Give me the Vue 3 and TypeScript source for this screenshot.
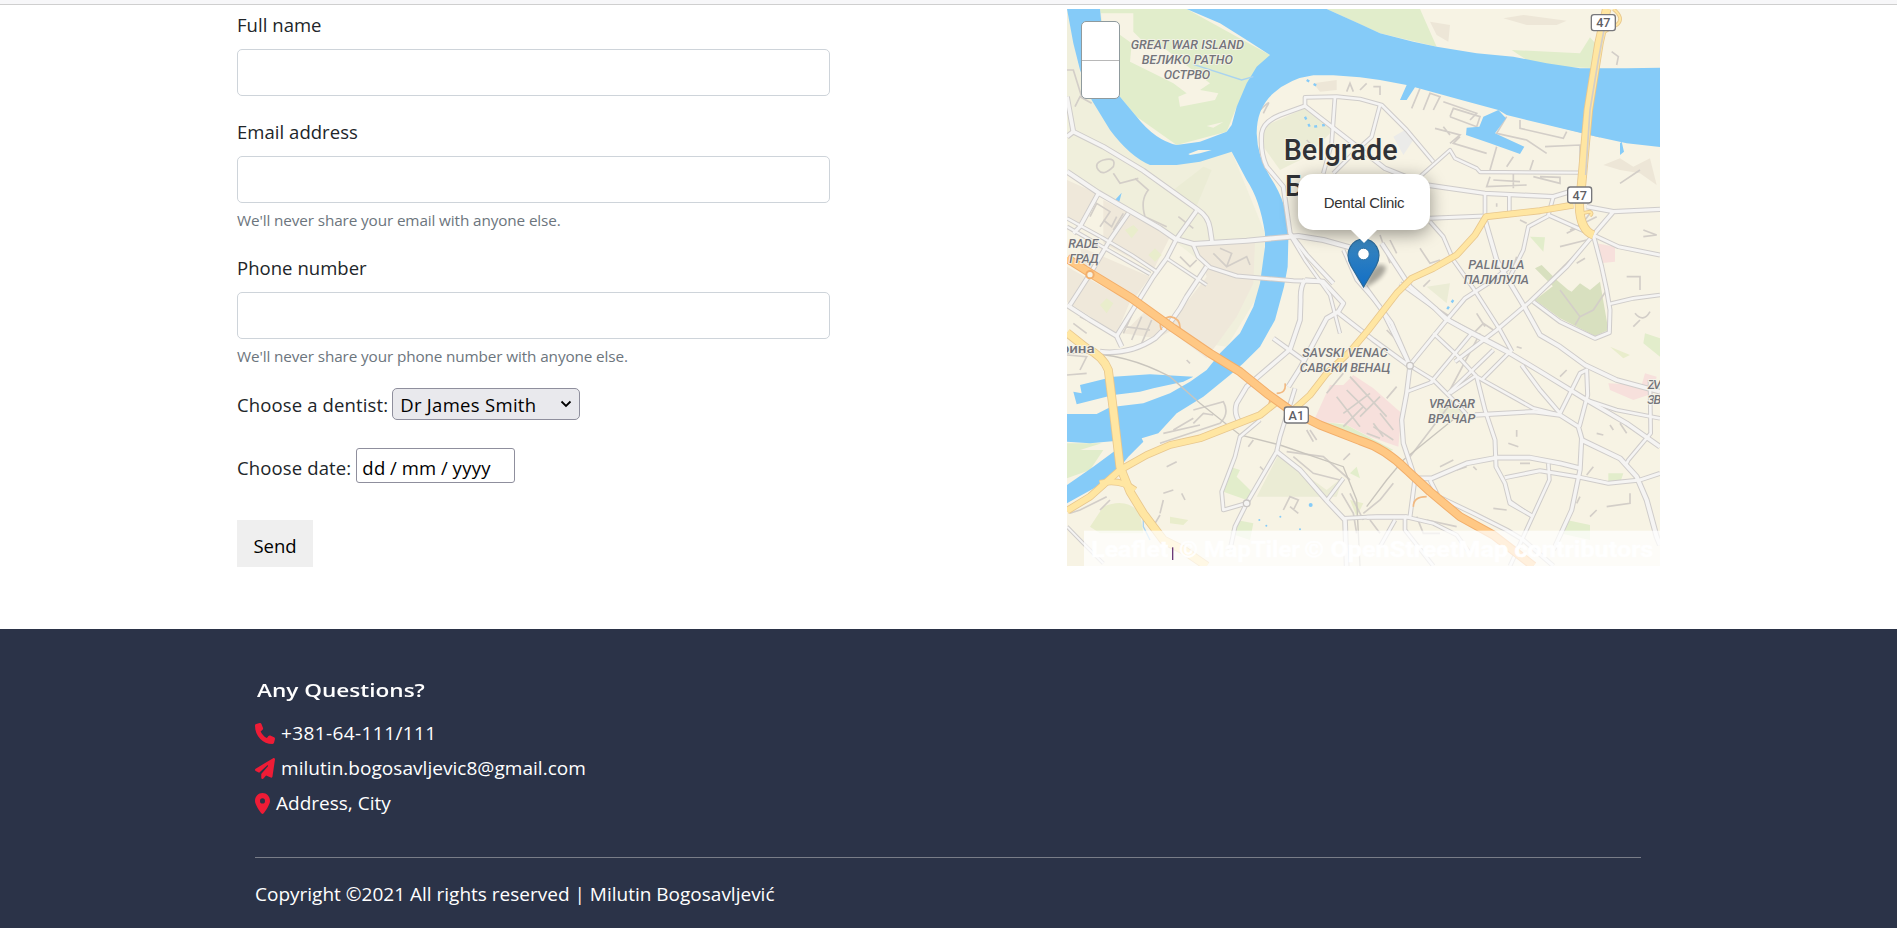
<script setup lang="ts">
interface Road { d: string; w: number }
interface Label { t: string; x: number; y: number; len: number; size: number }

const streets: Road[] = [
  { d: 'M21 290L40 395L130 440L250 512L345 580L415 630Q445 650 450 685L456 725', w: 13 },
  { d: 'M40 395L21 410', w: 13 },
  { d: 'M21 515L115 578L205 630L300 685L345 716L400 732L560 722L715 708L790 720L870 742', w: 14 },
  { d: 'M21 655L130 715L215 765L290 815M21 680L130 742L270 822', w: 9 },
  { d: 'M115 580L60 680L40 700M205 640L150 720L90 822L30 915', w: 12 },
  { d: 'M410 632L350 716L320 775L280 830L170 1008', w: 12 },
  { d: 'M21 915L90 960L170 1008L185 1040', w: 13 },
  { d: 'M120 1055Q210 1065 285 1015Q345 960 380 890L440 800', w: 13 },
  { d: 'M400 735L415 770L450 802L530 828L700 842L790 845', w: 11 },
  { d: 'M320 775L440 855', w: 8 },
  { d: 'M735 318L735 292L830 290L900 297L965 315L1040 390L1120 485', w: 10 },
  { d: 'M735 318L660 345Q610 365 605 400Q600 460 620 500L670 560L690 700L740 765L820 850', w: 12 },
  { d: 'M735 318L860 415L975 505L1100 555L1275 580L1480 590L1530 575', w: 12 },
  { d: 'M825 290L815 430L790 520M960 315L935 410L880 460L820 520', w: 10 },
  { d: 'M1080 530L1170 450L1185 475L1250 505L1260 516L1555 518', w: 9 },
  { d: 'M1275 580L1275 650M1348 585L1348 635M1480 590L1465 645', w: 10 },
  { d: 'M1110 655L1275 648', w: 11 },
  { d: 'M690 705L735 780L810 885L840 1000', w: 9 },
  { d: 'M850 750L890 840L960 920L1050 1100', w: 9 },
  { d: 'M735 840Q720 860 722 900L720 960L690 1048L560 1160L530 1210Q520 1240 540 1268', w: 13 },
  { d: 'M735 840L790 845L850 910L835 935L800 955L720 1105L685 1160', w: 13 },
  { d: 'M640 1015L730 1080M830 935L940 1020L1050 1100', w: 12 },
  { d: 'M600 1260L540 1310L525 1370L485 1475L490 1530L560 1510', w: 10 },
  { d: 'M705 1165L660 1310L650 1355L560 1510L525 1580L510 1650', w: 11 },
  { d: 'M650 1355L720 1410L800 1502L855 1560L860 1698', w: 13 },
  { d: 'M800 1502L850 1435M850 1555L950 1550L1040 1550', w: 10 },
  { d: 'M915 860L995 970L1050 1097L1040 1180L1025 1260L1030 1330L1065 1435', w: 12 },
  { d: 'M965 730L1050 860L1125 925L1155 955L1235 1000L1350 1060L1450 1120L1580 1200L1700 1270L1800 1340', w: 13 },
  { d: 'M1020 850L1125 925L1170 962L1285 1022L1354 1058', w: 10 },
  { d: 'M1110 665L1150 710L1180 780L1240 865L1320 990L1356 1055', w: 10 },
  { d: 'M1275 660L1310 780L1345 840L1390 915L1440 1005L1500 1040L1575 1095L1670 1140L1800 1175', w: 13 },
  { d: 'M1465 648L1405 680L1390 750L1345 840', w: 10 },
  { d: 'M1465 645L1600 705L1675 740L1800 765', w: 11 },
  { d: 'M1600 705L1660 635L1800 628M1580 620L1660 635', w: 12 },
  { d: 'M1600 705L1520 800L1410 905L1310 990L1185 1085', w: 11 },
  { d: 'M1600 705L1625 800L1640 870L1650 930L1648 998L1605 1015L1500 965L1420 905', w: 11 },
  { d: 'M1648 912L1720 895L1800 885', w: 10 },
  { d: 'M1050 1095L1160 960L1215 895L1300 840L1350 800', w: 11 },
  { d: 'M1120 1000L1190 1065L1250 1130L1420 1225L1500 1245', w: 10 },
  { d: 'M1110 1150L1235 1000M1165 1180L1300 1050M1265 1140L1350 1055', w: 10 },
  { d: 'M1050 1097L1120 1140L1190 1210L1220 1244', w: 10 },
  { d: 'M1040 1175L1120 1145M1170 1180L1250 1125', w: 10 },
  { d: 'M1250 1130L1275 1230L1305 1320L1308 1400L1335 1450L1350 1510L1420 1550', w: 11 },
  { d: 'M1245 1245L1420 1235L1500 1245L1555 1280L1565 1315L1560 1410L1535 1530L1480 1650', w: 12 },
  { d: 'M1385 1095L1440 1170L1500 1240L1560 1120L1580 1110L1583 1185L1558 1280', w: 11 },
  { d: 'M1580 1200L1670 1230L1800 1255M1770 1140L1772 1300L1705 1380L1700 1390', w: 10 },
  { d: 'M1565 1320L1680 1375L1730 1430L1760 1500L1790 1610L1800 1635', w: 14 },
  { d: 'M1065 1435L1115 1435L1220 1390L1310 1373L1410 1373L1500 1390L1560 1405', w: 13 },
  { d: 'M1335 1433L1440 1412L1560 1432L1645 1450L1740 1440L1800 1420', w: 11 },
  { d: 'M1465 1390L1468 1440L1390 1610L1350 1698', w: 10 },
  { d: 'M1065 1435L1050 1550L1035 1552L920 1552M1110 1440L1135 1490L1240 1540L1340 1590L1390 1620L1480 1698', w: 11 },
  { d: 'M1035 1550L1120 1570L1190 1605L1230 1660M1035 1552L1035 1590L1120 1698M1005 1560L960 1640', w: 10 },
  { d: 'M1345 1500L1415 1548M21 1580L70 1630L130 1690', w: 8 },
]

const yellow: Road[] = [
  { d: 'M21 998L80 1045Q130 1070 145 1110L160 1230L180 1400L210 1475L250 1540L310 1620L370 1650L440 1698', w: 24 },
  { d: 'M21 1532L90 1490L180 1410L260 1365L330 1335L420 1315L510 1280L600 1245L650 1205', w: 20 },
  { d: 'M120 1450Q180 1435 225 1470', w: 18 },
  { d: 'M700 1230L750 1185L800 1120L870 1055L925 990L1010 880L1055 835L1120 805L1190 765L1245 705L1278 650L1440 632L1540 615', w: 18 },
  { d: 'M1640 27L1617 130L1585 330L1565 550L1558 615Q1560 690 1600 705', w: 25 },
  { d: 'M1660 27Q1695 55 1670 75L1625 100M1565 640L1590 635Q1600 640 1590 647', w: 8 },
]

const motorway = 'M21 775L100 825L215 895L340 985L450 1060L540 1115L620 1180L690 1230L780 1275L900 1322Q975 1345 1040 1410L1110 1475L1200 1550L1300 1605L1420 1698'

const lanes: string[] = [
  'M21 210L40 210L65 290M45 320L60 290L95 310',
  'M130 480Q100 490 115 510Q130 530 160 500Q170 470 130 480M160 520L180 550L235 535M225 535L265 570Q240 600 255 650L320 680',
  'M90 650L110 610L150 635L120 680M130 660L155 680L170 650M160 690L190 640M355 650L400 685M360 770L390 800L410 780M460 760L500 800L560 770L570 795M480 745L515 760L500 800',
  'M735 560L760 585M720 555L740 570M590 340Q640 290 620 320L610 340M740 420L770 450M780 540L820 560M850 560L830 590',
  'M1055 325L1080 265M1090 330L1110 280L1140 290L1120 330M1150 305L1250 340L1230 360M1170 350L1180 325L1260 350L1250 380L1170 350M1125 385L1200 405L1170 430M1150 380L1170 405M1200 410L1180 430L1280 460M1340 350L1310 400L1400 420L1460 460M1380 360L1380 385L1510 415L1520 395M1310 440L1290 510M1400 350L1480 375L1620 410M1455 440L1560 435L1560 515',
  'M1290 530L1280 560L1400 555M1300 540L1380 545M1420 530L1500 550L1500 532L1440 530M1360 520L1360 565M1420 480L1410 510M1360 470L1340 500',
  'M1520 700L1560 680L1590 640M1500 740L1580 720M1550 760L1510 800L1470 840M1575 775L1550 790M1530 690L1610 650M1655 155L1675 170L1670 195',
  'M1680 550L1740 510M1750 690L1790 705L1750 710M1700 830L1740 830L1740 870M1720 980L1740 960M1725 940Q1750 970 1770 935',
  'M21 1065L80 1070L60 1110M80 1000L40 970M100 970L60 950M190 1000L220 935M215 1020L245 950M245 1030L275 960M195 980L270 990M380 1080L390 1090',
  'M21 1125L80 1120M400 1270L430 1240L460 1245M340 1290L400 1255M310 1300L420 1275M300 1330L480 1270Q510 1240 490 1205L400 1230',
  'M140 1490L60 1530L30 1540M150 1500L120 1530M320 1400L350 1385M310 1480L340 1470M310 1500L300 1540M365 1480L375 1500M300 1545L285 1570',
  'M700 1530L715 1500L690 1490L670 1530M690 1520L715 1540M600 1400L610 1410M580 1320L565 1340M750 1290L770 1320M740 1290L760 1325',
  'M860 1170L920 1230M830 1190L900 1280M850 1240L930 1180M900 1250L960 1190M870 1130L980 1250M850 1280L910 1220M960 1240L1000 1290M800 1180L850 1120M940 1270L970 1310M980 1195L1010 1160',
  'M845 1480L880 1540L890 1600M870 1480L910 1560M870 1360L850 1380M700 1370L760 1420L840 1440M680 1355L790 1370L870 1440M940 1280L1000 1320M920 1300L960 1315',
  'M1180 1200L1050 1370M1170 1170L1260 1000M1240 1000L1270 970L1300 990M1250 940L1275 980M1140 930L1170 950M980 990L1020 1030M1090 860L1110 840',
  'M1190 1410L1220 1400M1250 1410L1240 1400M1300 1525L1340 1530M1380 1390L1410 1390M1550 1510L1560 1490M1590 1550L1610 1530M1640 1520L1710 1510L1710 1480M1600 1400L1580 1425',
  'M1345 1330L1375 1340M1370 1310L1370 1290M1500 1130L1520 1110M1370 1040L1385 1045M1610 1300L1630 1305M1650 1275L1660 1290M1680 1270L1700 1300',
  'M1000 1450L960 1500L910 1540M1100 1560L1190 1580M1070 1550L1090 1600L1140 1600M930 1560L960 1600M1140 1400L1180 1380',
  'M1500 870L1560 950L1600 930L1640 870M1560 950L1545 975M860 275L870 250L880 275M900 270L920 250M940 260L960 260L960 285',
  'M860 780L900 800M990 720L1010 760M960 705L990 790M1080 745L1110 790L1140 780M1380 660L1400 670M1310 620L1310 610M1370 770L1360 800',
]

const ramps = 'M330 950Q290 960 305 990M360 995Q365 955 330 950M620 1170Q640 1190 620 1230M650 1180Q680 1180 675 1150M1060 1520Q1060 1490 1100 1490M1130 1475L1140 1500'

const rail = 'M21 1060Q180 1050 330 1130L420 1210L540 1305L660 1335L850 1400L890 1500L900 1698M1190 1250L1030 1380L980 1440L920 1520'

const labels: Label[] = [
  { t: 'GREAT WAR ISLAND', x: 382, y: 147, len: 340, size: 38 },
  { t: 'ВЕЛИКО РАТНО', x: 382, y: 192, len: 274, size: 38 },
  { t: 'ОСТРВО', x: 381, y: 237, len: 140, size: 38 },
  { t: 'PALILULA', x: 1309, y: 807, len: 168, size: 38 },
  { t: 'ПАЛИЛУЛА', x: 1309, y: 852, len: 196, size: 38 },
  { t: 'SAVSKI VENAC', x: 855, y: 1070, len: 256, size: 38 },
  { t: 'САВСКИ ВЕНАЦ', x: 855, y: 1115, len: 272, size: 38 },
  { t: 'VRACAR', x: 1176, y: 1223, len: 138, size: 38 },
  { t: 'ВРАЧАР', x: 1175, y: 1268, len: 142, size: 38 },
  { t: 'RADE', x: 70, y: 745, len: 90, size: 38 },
  { t: 'ГРАД', x: 72, y: 790, len: 88, size: 38 },
  { t: 'ZV', x: 1783, y: 1166, len: 40, size: 38 },
  { t: 'ЗВ', x: 1783, y: 1211, len: 42, size: 38 },
]

const shields = [
  { t: '47', x: 1630, y: 68 },
  { t: '47', x: 1559, y: 585 },
  { t: 'A1', x: 709, y: 1245 },
]
</script>

<template>
  <div class="page">
    <div class="topline"></div>
    <main class="content">
      <form class="form" @submit.prevent>
        <div class="field">
          <label for="name">Full name</label>
          <input id="name" type="text" />
        </div>
        <div class="field">
          <label for="mail">Email address</label>
          <input id="mail" type="email" />
          <small>We'll never share your email with anyone else.</small>
        </div>
        <div class="field">
          <label for="phone">Phone number</label>
          <input id="phone" type="tel" />
          <small>We'll never share your phone number with anyone else.</small>
        </div>
        <div class="row dentist">
          <span>Choose a dentist:</span>
          <div class="select">
            <span>Dr James Smith</span>
            <svg width="12" height="8" viewBox="0 0 12 8"><path d="M1.500 1.500L6 6L10.500 1.500" fill="none" stroke="#000" stroke-width="1.800" /></svg>
          </div>
        </div>
        <div class="row date">
          <span>Choose date:</span>
          <div class="datebox"><span>dd</span><span>/</span><span>mm</span><span>/</span><span>yyyy</span></div>
        </div>
        <button class="send" type="submit">Send</button>
      </form>

      <div class="map">
        <svg class="tiles" viewBox="21 27 1779 1671" width="593" height="557">
          <rect x="21" y="27" width="1779" height="1671" fill="#f7f3e4" />
          <path fill="#f0efdc" d="M21 27L60 220L150 390L270 490L515 455L615 700L610 860L500 1040L430 1030L520 860L300 690L21 510Z" />
          <path fill="#efe8da" d="M21 540L110 580L60 680L21 655ZM130 600L210 640L330 710L280 810L130 730ZM410 730L585 725L580 850L530 950L440 1075L320 985L440 830ZM60 740L270 830L220 900L70 800ZM21 800L210 905L170 1000L21 905ZM190 1000L260 930L340 990L290 1015Z" />
          <path fill="#e1edcb" d="M120 27H380L630 165L530 320L500 395L350 435L230 350L180 290L130 130ZM800 27H1080L1130 140L960 100ZM1355 150L1560 160L1590 112L1615 140V205L1500 200L1400 180ZM21 1330L125 1330L60 1350L130 1350L90 1410L21 1435Z" />
          <path fill="#f7f3e4" d="M123 40L220 40V95L245 120L320 150L410 220L450 250L420 270L475 280L465 300L360 320L355 290L380 280L340 250L280 220L210 185L215 130L125 65ZM440 378L490 366L460 383Z" />
          <path fill="#ebecd5" d="M610 440L610 380L735 325L820 390L740 470L660 510ZM340 570L430 500L455 510L405 630ZM1135 1210H1210V1260H1140ZM655 1365L800 1470L850 1430L830 1490L590 1490ZM1100 860L1170 850L1160 910Z" />
          <path fill="#e2edcb" d="M510 1400L540 1410L530 1430L580 1480L560 1500L490 1475ZM530 1560L580 1570L570 1620L510 1600ZM1520 1560L1590 1575V1620L1500 1600ZM790 1265L860 1275L1000 1350L980 1355ZM1755 1000L1800 1015V1070L1750 1030ZM1410 710L1455 712L1450 755ZM1645 1420L1690 1420L1680 1450L1645 1450ZM870 1420L890 1400L900 1435Z" />
          <path fill="#e9edcc" d="M195 690L220 675L235 690L215 715ZM265 765L285 745L305 765L285 785ZM120 915L140 895L160 910L140 940ZM130 1520Q200 1490 240 1540L250 1600L120 1600L90 1580ZM330 1550L385 1560L370 1575L330 1570ZM870 1500L910 1510L890 1550ZM1650 1040L1710 1065L1690 1075Z" />
          <path fill="#d8e0bf" d="M1425 900L1490 850L1535 875L1560 850L1590 870L1620 845L1645 990L1605 1008L1500 955ZM1425 805L1445 795L1490 840L1525 870L1490 870Z" />
          <path fill="#f7e0dc" d="M810 1155L850 1155L880 1125L940 1165L1025 1240L1015 1340L930 1310L850 1270L760 1265ZM1610 730L1665 740V785L1620 790ZM1645 1150L1745 1155L1755 1120L1790 1130L1780 1180L1720 1200L1650 1170Z" />
          <path fill="#ede6d7" d="M1110 65L1170 75L1165 125L1130 105ZM1330 55L1390 45L1520 62L1490 75L1400 75ZM1630 495L1680 475L1720 500L1770 475L1790 555L1740 520L1680 510ZM760 250L830 240V270L780 275Z" />
          <path fill="#ebebe9" d="M1000 410L1035 390L1060 420L1030 465Z" />
          <path v-for="d in lanes" :key="d" :d="d" class="lane" />
          <path fill="#85cbf8" d="M800 27L900 72L960 100L1060 125L1130 140L1250 160L1360 170L1460 190L1560 205H1700L1800 203V441L1700 430L1610 410L1400 360L1340 345L1315 330L1215 303L1065 262L1040 300L1020 300L1040 255L960 240L900 232L820 226H760Q690 235 640 280Q590 325 590 400Q592 470 630 530Q690 620 685 720L683 800L672 860L645 960L600 1040L550 1090L510 1125L430 1190L350 1240L295 1300L245 1315L250 1325L205 1370L165 1420L110 1460L21 1510V1455L100 1400L165 1352V1323L90 1330L21 1325V1242H110L150 1222L250 1210L330 1180L390 1145L440 1110L480 1060L540 1000L580 920L600 850L615 740V700Q600 600 560 540L515 455L420 485L350 495H270Q210 470 150 390L95 300L60 210L40 130L21 27H120L130 130L155 240L180 290L230 350Q285 420 350 435L420 425L500 395L515 375L530 320L560 250L590 200L630 165L560 120L480 70L380 27Z" />
          <path fill="#85cbf8" d="M40 1175L65 1180L60 1155L160 1130L270 1123L400 1130L370 1145L280 1165L240 1175L160 1185L50 1213ZM1220 383L1258 380L1270 350L1315 330L1338 355L1305 400L1393 440L1380 462L1290 430L1218 405ZM1680 430L1680 465L1692 455L1685 425ZM165 600L185 578L178 605Z" />
          <path fill="#f7f3e4" d="M385 462L415 450L455 450L420 460L390 465Z" />
          <path stroke="#85cbf8" stroke-width="7" stroke-dasharray="9 15" fill="none" d="M740 240L775 260M735 350L750 382L795 375M1180 900L1160 930" />
          <path stroke="#a9d3f0" stroke-width="4" fill="none" d="M400 193L545 240L580 230M250 1520V1580L270 1620" />
          <circle v-for="b in [[752, 1515, 6], [598, 1560, 3], [619, 1577, 3], [661, 1550, 3], [720, 1588, 3]]" :key="b[0]" :cx="b[0]" :cy="b[1]" :r="b[2]" fill="#85cbf8" />
          <path :d="rail" class="rail" />
          <path v-for="r in streets" :key="'c' + r.d" :d="r.d" class="line" stroke="#cfccca" :stroke-width="r.w + 4" />
          <path v-for="r in streets" :key="'f' + r.d" :d="r.d" class="line" stroke="#f5f4f3" :stroke-width="r.w - 2" />
          <path :d="ramps" fill="none" stroke="#f2b981" stroke-width="5" />
          <path v-for="r in yellow" :key="'c' + r.d" :d="r.d" class="line" stroke="#e8c78e" :stroke-width="r.w + 3" />
          <path v-for="r in yellow" :key="'f' + r.d" :d="r.d" class="line" stroke="#ffe6a2" :stroke-width="r.w - 2" />
          <path d="M1632 90L1615 180L1590 330L1577 525" class="lane" />
          <path :d="motorway" class="line" stroke="#f2ae6b" stroke-width="27" />
          <path :d="motorway" class="line" stroke="#ffc884" stroke-width="21" />
          <circle cx="90" cy="824" r="11" fill="#f7f3e4" stroke="#f2ae6b" stroke-width="6" />
          <circle v-for="c in [[1050, 1097], [560, 1510]]" :key="c[0]" :cx="c[0]" :cy="c[1]" r="10" fill="#f5f4f3" stroke="#c9c6c3" stroke-width="4" />
          <g class="place">
            <text v-for="l in labels" :key="l.t" :x="l.x" :y="l.y" :textLength="l.len" lengthAdjust="spacing" :font-size="l.size">{{ l.t }}</text>
            <text class="upright" x="53" y="1059" textLength="102" lengthAdjust="spacingAndGlyphs" font-size="38">рина</text>
          </g>
          <g class="city">
            <text x="671" y="481" textLength="342" lengthAdjust="spacingAndGlyphs">Belgrade</text>
            <text x="675" y="589">Београд</text>
          </g>
          <g v-for="s in shields" :key="s.x" class="shield">
            <rect :x="s.x - 36" :y="s.y - 24" width="72" height="48" rx="8" />
            <text :x="s.x" :y="s.y + 14">{{ s.t }}</text>
          </g>
          <rect x="72" y="1592" width="1728" height="106" fill="#fff" fill-opacity=".72" />
          <g class="credit">
            <text x="94" y="1671" textLength="231" lengthAdjust="spacingAndGlyphs">Leaflet</text>
            <text x="358" y="1671" textLength="362" lengthAdjust="spacingAndGlyphs">© MapTiler</text>
            <text x="733" y="1671" textLength="1047" lengthAdjust="spacingAndGlyphs">© OpenStreetMap contributors</text>
          </g>
          <rect x="336" y="1642" width="4" height="38" fill="#6b3a78" />
        </svg>
        <div class="zoomctl"><span></span><span></span></div>
        <svg class="pin" width="60" height="56" viewBox="0 0 60 56">
          <defs>
            <linearGradient id="pinfill" x1="0" y1="0" x2="0" y2="1"><stop offset="0" stop-color="#3a86bd" /><stop offset="1" stop-color="#126fc6" /></linearGradient>
            <filter id="soft"><feGaussianBlur stdDeviation="2.200" /></filter>
          </defs>
          <path d="M17 50L23 34Q32 22 39 29Q38 40 17 50Z" fill="#000" opacity=".32" filter="url(#soft)" />
          <path d="M16.500 49L4 28C-4 13 6 1 16.500 1S37 13 29 28Z" fill="url(#pinfill)" stroke="#2a6999" stroke-width="1.200" />
          <circle cx="16.500" cy="16" r="5.800" fill="#fff" stroke="#2f74a8" />
        </svg>
        <div class="popup">Dental Clinic</div>
      </div>
    </main>

    <footer class="footer">
      <div class="inner">
        <h2><span>Any Questions?</span></h2>
        <p><svg width="20" height="21" viewBox="0 0 512 512" preserveAspectRatio="none"><path d="M164.900 24.600c-7.700-18.600-28-28.500-47.400-23.200l-88 24C12.100 30.200 0 46 0 64c0 247.400 200.600 448 448 448c18 0 33.800-12.100 38.600-29.500l24-88c5.300-19.400-4.600-39.700-23.200-47.400l-96-40c-16.300-6.800-35.200-2.100-46.300 11.600L304.700 368C234.300 334.700 177.300 277.700 144 207.300L193.300 167c13.700-11.200 18.400-30 11.600-46.300l-40-96z" /></svg><span class="t-phone">+381-64-111/111</span></p>
        <p><svg width="20" height="21" viewBox="0 0 512 512" preserveAspectRatio="none"><path d="M498.100 5.600c10.100 7 15.400 19.100 13.500 31.200l-64 416c-1.500 9.700-7.400 18.200-16 23s-18.900 5.400-28 1.600L284 427.700l-68.500 74.100c-8.900 9.700-22.900 12.900-35.200 8.100S160 493.200 160 480V396.400c0-4 1.500-7.800 4.200-10.700L331.800 202.800c5.800-6.300 5.600-16-.4-22s-15.700-6.400-22-.7L106 360.800 17.700 316.600C7.100 311.300 .3 300.700 0 288.900s5.900-22.800 16.100-28.700l448-256c10.700-6.100 23.900-5.500 34 1.400z" /></svg><span class="t-mail">milutin.bogosavljevic8@gmail.com</span></p>
        <p><svg width="15" height="21" viewBox="0 0 384 512" preserveAspectRatio="none"><path d="M215.700 499.200C267 435 384 279.400 384 192C384 86 298 0 192 0S0 86 0 192c0 87.400 117 243 168.300 307.200c12.300 15.300 35.100 15.300 47.400 0zM192 128a64 64 0 1 1 0 128 64 64 0 1 1 0-128z" /></svg><span>Address, City</span></p>
        <hr />
        <div class="copy">Copyright ©2021 All rights reserved | Milutin Bogosavljević</div>
      </div>
    </footer>
  </div>
</template>

<style>
body { margin: 0; background: #fff; }
</style>

<style scoped>
* { box-sizing: border-box; }
.page { width: 1897px; height: 928px; overflow: hidden; display: flex; flex-direction: column; font: 18.500px/29px "Open Sans", "Noto Sans", sans-serif; color: #212529; }
.topline { height: 5px; flex: none; background: #f7f7f9; border-bottom: 1px solid #cfcfcf; }
.content { height: 624px; flex: none; padding: 4px 237px 0; display: flex; justify-content: space-between; align-items: flex-start; }
.form { width: 593px; display: flex; flex-direction: column; align-items: flex-start; padding-top: 1px; }
.field { width: 100%; display: flex; flex-direction: column; align-items: flex-start; }
.field label { height: 29px; margin-bottom: 10px; white-space: nowrap; letter-spacing: .04px; }
.field input { width: 593px; height: 47px; border: 1px solid #ced4da; border-radius: 5px; background: #fff; }
.field + .field { margin-top: 21px; }
small { font-size: 15.300px; letter-spacing: -.12px; line-height: 24px; height: 24px; margin-top: 5px; color: #6c757d; white-space: nowrap; }
.row { display: flex; align-items: center; white-space: nowrap; letter-spacing: .13px; }
.dentist { height: 32px; margin-top: 20px; }
.select { margin-left: 4px; width: 188px; height: 32px; border: 1px solid #8f8f9d; border-radius: 5px; background: #e9e9ed; color: #000; padding: 2px 7px; display: flex; justify-content: space-between; align-items: center; letter-spacing: .3px; }
.date { height: 35px; margin-top: 28px; }
.date > span { padding-top: 3px; }
.datebox { margin-left: 5px; width: 159px; height: 35px; border: 1px solid #8f8f9d; border-radius: 3px; color: #000; padding: 4px 5px 0; display: flex; gap: 4.500px; letter-spacing: .3px; }
.send { margin-top: 37px; width: 76px; height: 47px; border: 0; background: #efefef; font: inherit; color: #000; padding: 3px 0 0; }
.map { position: relative; width: 593px; height: 557px; overflow: hidden; }
.tiles { display: block; }
.line { fill: none; stroke-linejoin: round; }
.lane { fill: none; stroke: #d3cec8; stroke-width: 5; }
.rail { fill: none; stroke: #c9c5bd; stroke-width: 4; }
.place text { font-family: Roboto, sans-serif; font-style: italic; font-weight: 500; fill: #74747a; stroke: #f6f4ea; stroke-width: 5; paint-order: stroke; text-anchor: middle; }
.place .upright { font-style: normal; }
.city text { font: 500 86px Roboto, sans-serif; fill: #303236; stroke: #f6f3e6; stroke-width: 6; paint-order: stroke; }
.shield rect { fill: #fff; stroke: #77777b; stroke-width: 4; }
.shield text { font: 500 38px Roboto, sans-serif; fill: #5f5f65; text-anchor: middle; }
.credit text { font: 700 66px Roboto, sans-serif; fill: #fff; stroke: #fff; stroke-width: 1.500; }
.zoomctl { position: absolute; left: 14px; top: 12px; width: 39px; height: 78px; border: 1.500px solid #8f9a9d; border-radius: 5px; background: #fff; display: flex; flex-direction: column; }
.zoomctl span { flex: 1; }
.zoomctl span + span { border-top: 1px solid #b8b8b8; }
.pin { position: absolute; left: 280px; top: 229px; }
.popup { position: absolute; left: 231px; top: 165px; width: 132px; height: 56px; border-radius: 15px; background: #fff; text-align: center; font: 15px/58px "Liberation Sans", Arial, sans-serif; letter-spacing: -.27px; color: #333; box-shadow: 0 4px 17px rgba(0, 0, 0, .4); }
.popup::after { content: ""; position: absolute; left: 52px; top: 55px; border: 14px solid transparent; border-top-color: #fff; border-bottom: 0; }
.footer { flex: 1; background: #2b3348; color: #fff; padding: 46px 256px 0 255px; }
h2 { margin: 0 0 12px 2px; height: 29px; font: 600 18.500px/29px "Open Sans", "Noto Sans", sans-serif; }
h2 span { display: inline-block; transform: scaleX(1.22); transform-origin: 0 50%; }
p { margin: 0; height: 35px; display: flex; align-items: center; gap: 6px; font-size: 19px; white-space: nowrap; }
p svg { fill: #ee1c36; flex: none; }
.t-phone { letter-spacing: .4px; }
.t-mail { letter-spacing: .04px; }
hr { margin: 36px 0 22px; border: 0; height: 1px; background: #797d88; }
.copy { font-size: 19px; white-space: nowrap; }
</style>
